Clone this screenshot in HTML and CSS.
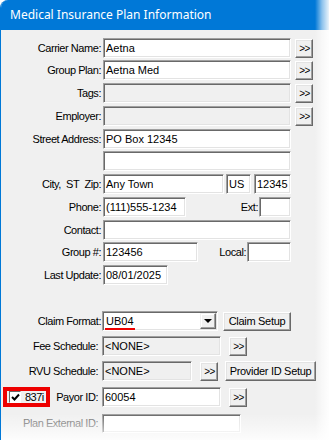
FILE: index.html
```html
<!DOCTYPE html>
<html>
<head>
<meta charset="utf-8">
<link rel="stylesheet" href="styles.css">
</head>
<body>
<div class="dialog">
  <div class="titlebar">Medical Insurance Plan Information</div>
  <div class="form">
    <div class="row first">
      <span class="lbl">Carrier Name:</span>
      <div class="main"><div class="field grow">Aetna</div></div>
      <span class="btn more">&gt;&gt;</span>
    </div>
    <div class="row t2">
      <span class="lbl">Group Plan:</span>
      <div class="main"><div class="field grow">Aetna Med</div></div>
      <span class="btn more">&gt;&gt;</span>
    </div>
    <div class="row">
      <span class="lbl">Tags:</span>
      <div class="main"><div class="field grow dis"></div></div>
      <span class="btn more">&gt;&gt;</span>
    </div>
    <div class="row">
      <span class="lbl">Employer:</span>
      <div class="main"><div class="field grow dis"></div></div>
      <span class="btn more">&gt;&gt;</span>
    </div>
    <div class="row">
      <span class="lbl">Street Address:</span>
      <div class="main"><div class="field grow">PO Box 12345</div></div>
    </div>
    <div class="row t2">
      <span class="lbl"></span>
      <div class="main"><div class="field grow"></div></div>
    </div>
    <div class="row">
      <span class="lbl">City,&nbsp; ST&nbsp; Zip:</span>
      <div class="main">
        <div class="field w-city">Any Town</div>
        <div class="field w-st">US</div>
        <div class="field w-zip">12345</div>
      </div>
    </div>
    <div class="row">
      <span class="lbl">Phone:</span>
      <div class="main">
        <div class="field w-phone">(111)555-1234</div>
        <span class="sublbl">Ext:</span>
        <div class="field w-ext"></div>
      </div>
    </div>
    <div class="row">
      <span class="lbl">Contact:</span>
      <div class="main"><div class="field grow"></div></div>
    </div>
    <div class="row t2">
      <span class="lbl">Group #:</span>
      <div class="main">
        <div class="field w-group">123456</div>
        <span class="sublbl">Local:</span>
        <div class="field w-local"></div>
      </div>
    </div>
    <div class="row">
      <span class="lbl">Last Update:</span>
      <div class="main"><div class="field w-date">08/01/2025</div></div>
    </div>

    <div class="row lower claim">
      <span class="lbl">Claim Format:</span>
      <div class="field combo"><span class="ub">UB04</span><span class="drop"></span></div>
      <span class="btn b-claim">Claim Setup</span>
    </div>
    <div class="row lower sp5">
      <span class="lbl l2">Fee Schedule:</span>
      <div class="field dis w-fee">&lt;NONE&gt;</div>
      <span class="btn more m8">&gt;&gt;</span>
    </div>
    <div class="row lower sp5">
      <span class="lbl l2">RVU Schedule:</span>
      <div class="field dis w-rvu">&lt;NONE&gt;</div>
      <span class="btn more m8">&gt;&gt;</span>
      <span class="btn b-prov">Provider ID Setup</span>
    </div>
    <div class="row lower sp7">
      <span class="lbl l2 payor">
        <span class="redbox"><span class="chk"><svg width="9" height="9" viewBox="0 0 9 9"><path d="M1 4 L3.5 6.5 L8 1.5" fill="none" stroke="#000" stroke-width="2"/></svg></span><span class="chk-txt">837i</span></span>
        <span class="payor-txt">Payor ID:</span>
      </span>
      <div class="field w-fee">60054</div>
      <span class="btn more m8">&gt;&gt;</span>
    </div>
    <div class="row lower sp6">
      <span class="lbl l2 gray">Plan External ID:</span>
      <div class="field w-ext-id"></div>
    </div>
  </div>
  <div class="fade"></div>
</div>
</body>
</html>
```

FILE: styles.css
```css
* { box-sizing: border-box; }
html, body { margin: 0; padding: 0; background: #fff; }
body {
  width: 329px;
  height: 440px;
  overflow: hidden;
  font-family: "Liberation Sans", Arial, sans-serif;
  font-size: 11px;
  color: #000;
}
.dialog {
  position: relative;
  width: 329px;
  height: 440px;
  background: #f0f0f0;
  border-left: 1px solid #0078d7;
  border-top-left-radius: 8px;
  overflow: hidden;
}
.titlebar {
  height: 30px;
  margin-left: -1px;
  background: #0078d7;
  color: #fff;
  font-family: "Noto Sans", sans-serif;
  font-size: 12px;
  line-height: 30px;
  padding-left: 10px;
  white-space: nowrap;
}
.form {
  display: flex;
  flex-direction: column;
  padding-top: 8px;
}
.row {
  display: flex;
  align-items: center;
  height: 20px;
  margin-top: 3px;
}
.row.first { margin-top: 0; }
.row.t2 { margin-top: 2px; }
.row.claim { margin-top: 26px; }
.row.sp5 { margin-top: 5px; }
.row.sp6 { margin-top: 6px; }
.row.sp7 { margin-top: 6px; }
.lbl {
  width: 101px;
  flex: none;
  text-align: right;
  padding-right: 1px;
  letter-spacing: -0.45px;
  white-space: nowrap;
}
.lbl.l2 { padding-right: 4px; }
.lbl.gray { color: #6d6d6d; }
.main {
  display: flex;
  align-items: center;
  width: 188px;
  margin-left: 1px;
  flex: none;
}
.field {
  height: 20px;
  background: #fff;
  border: 1px solid;
  border-color: #a0a0a0 #fff #fff #a0a0a0;
  box-shadow: inset 1px 1px 0 #696969, inset -1px -1px 0 #e3e3e3;
  padding: 0 2px;
  line-height: 18px;
  white-space: nowrap;
  overflow: hidden;
  flex: none;
}
.field.dis { background: #f0f0f0; }
.grow { flex: 1; }
.w-city { width: 121px; }
.w-st { width: 25px; margin-left: 2px; }
.w-zip { width: 37px; margin-left: 3px; }
.w-phone { width: 83px; }
.w-ext { width: 32px; }
.w-group { width: 95px; }
.w-local { width: 44px; }
.w-date { width: 65px; }
.sublbl {
  flex: 1;
  text-align: right;
  padding-right: 1px;
  letter-spacing: -0.45px;
}
.btn {
  display: flex;
  align-items: center;
  justify-content: center;
  flex: none;
  background: #f0f0f0;
  border: 1px solid;
  border-color: #fff #696969 #696969 #fff;
  box-shadow: inset -1px -1px 0 #a0a0a0, inset 1px 1px 0 #e3e3e3;
  white-space: nowrap;
  letter-spacing: -0.3px;
}
.more {
  width: 18px;
  height: 19px;
  margin-left: 4px;
  font-size: 10px;
  letter-spacing: -0.5px;
  padding-left: 1px;
}
.more.m8 { margin-left: 8px; }
.combo {
  position: relative;
  width: 116px;
  height: 20px;
  display: flex;
  align-items: center;
  justify-content: space-between;
  padding: 0 1px 0 3px;
}
.ub { position: relative; line-height: 13px; }
.ub::after {
  content: "";
  position: absolute;
  left: -1px;
  top: 13px;
  width: 30px;
  height: 3px;
  background: #ee0000;
}
.drop {
  width: 16px;
  height: 16px;
  background: #f0f0f0;
  border: 1px solid;
  border-color: #f0f0f0 #696969 #696969 #f0f0f0;
  box-shadow: inset -1px -1px 0 #a0a0a0, inset 1px 1px 0 #fff;
  position: relative;
}
.drop::after {
  content: "";
  position: absolute;
  left: 3px;
  top: 5px;
  border-left: 4px solid transparent;
  border-right: 4px solid transparent;
  border-top: 4px solid #000;
}
.b-claim { width: 68px; height: 19px; margin-left: 5px; }
.b-prov { width: 91px; height: 20px; margin-left: 7px; }
.w-fee { width: 119px; }
.w-rvu { width: 90px; }
.w-ext-id { width: 139px; height: 19px; }
.payor {
  display: flex;
  align-items: center;
  justify-content: space-between;
}
.redbox {
  display: flex;
  align-items: center;
  width: 47px;
  height: 20px;
  margin-left: 2px;
  border: 4px solid #ee0000;
  letter-spacing: -0.3px;
  overflow: visible;
}
.chk {
  width: 12px;
  height: 12px;
  margin-left: 2px;
  flex: none;
  background: #fff;
  border: 1px solid;
  border-color: #696969 #fff #fff #696969;
  display: flex;
  align-items: center;
  justify-content: center;
}
.chk-txt { margin-left: 4px; flex: none; letter-spacing: -0.5px; }
.fade {
  position: absolute;
  inset: 0;
  pointer-events: none;
  background:
    linear-gradient(to right, rgba(255,255,255,0) 314px, rgba(255,255,255,0.55) 321px, rgba(255,255,255,0.97) 329px),
    linear-gradient(to bottom, rgba(255,255,255,0) 414px, rgba(255,255,255,0.5) 430px, rgba(255,255,255,0.85) 440px);
}
```
